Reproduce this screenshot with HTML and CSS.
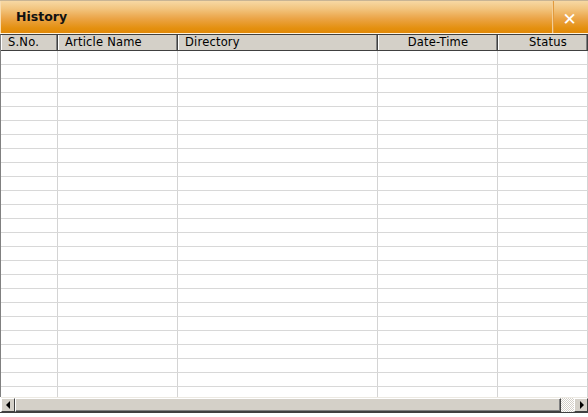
FILE: index.html
```html
<!DOCTYPE html>
<html>
<head>
<meta charset="utf-8">
<link rel="stylesheet" href="styles.css">
</head>
<body>
<div class="window">
  <div class="titlebar">
    <div class="title">History</div>
    <div class="close">&#x2715;</div>
  </div>
  <div class="grid">
    <div class="head">
      <div class="hc left">S.No.</div>
      <div class="hc left">Article Name</div>
      <div class="hc left">Directory</div>
      <div class="hc center">Date-Time</div>
      <div class="hc center status">Status</div>
    </div>
    <div class="body" id="body"></div>
  </div>
  <div class="hscroll">
    <div class="btn"><span class="tri l"></span></div>
    <div class="thumb"></div>
    <div class="track"></div>
    <div class="btn"><span class="tri r"></span></div>
  </div>
  <div class="foot"></div>
</div>
<script>
  var b = document.getElementById('body');
  for (var i = 0; i < 25; i++) {
    var r = document.createElement('div');
    r.className = 'row';
    for (var j = 0; j < 5; j++) {
      var c = document.createElement('div');
      c.className = 'cell';
      r.appendChild(c);
    }
    b.appendChild(r);
  }
</script>
</body>
</html>
```
FILE: styles.css
```css
html, body {
  margin: 0;
  padding: 0;
  background: #ffffff;
}
.window {
  width: 588px;
  height: 417px;
  display: flex;
  flex-direction: column;
  overflow: hidden;
  font-family: "DejaVu Sans", Verdana, sans-serif;
  background: #ffffff;
}
.titlebar {
  flex: none;
  display: flex;
  align-items: stretch;
  background: linear-gradient(to bottom, #f7d8a4 0%, #f2c47e 25%, #eba446 55%, #e4900f 85%, #e08808 100%);
  border-top: 1px solid #c8b494;
  border-bottom: 1px solid #fff4e0;
  box-sizing: border-box;
  height: 34px;
}
.title {
  flex: 1;
  padding-left: 15px;
  padding-top: 8px;
  font-size: 12.5px;
  font-weight: bold;
  color: #111111;
  border-left: 1px solid #f8dcb0;
}
.close {
  width: 36px;
  border-left: 1px solid #f3cf98;
  box-shadow: inset 1px 0 0 #e29a3c;
  color: #ffffff;
  font-size: 17px;
  font-weight: bold;
  display: flex;
  align-items: center;
  justify-content: center;
  padding-top: 4px;
  padding-right: 2px;
  box-sizing: border-box;
}
.grid {
  flex: 1;
  display: flex;
  flex-direction: column;
  overflow: hidden;
  border-top: 1px solid #404040;
  border-left: 1px solid #808080;
}
.head, .row {
  display: grid;
  grid-template-columns: 57px 120px 200px 120px 1fr;
}
.head {
  height: 15px;
  flex: none;
  background: #d4d0c8;
  border-bottom: 1px solid #404040;
}
.hc {
  font-size: 11.5px;
  letter-spacing: 0.2px;
  line-height: 15px;
  color: #000000;
  border-left: 1px solid #ffffff;
  border-right: 1px solid #404040;
  box-shadow: inset -1px 0 0 #808080;
  white-space: nowrap;
  overflow: hidden;
}
.hc.left { padding-left: 6px; }
.hc.center { text-align: center; }
.hc.status { padding-left: 10px; }
.body {
  flex: 1;
  overflow: hidden;
}
.row {
  height: 14px;
  box-sizing: border-box;
  border-bottom: 1px solid #d8d8d8;
}
.cell {
  border-right: 1px solid #d4d4d4;
}
.hscroll {
  height: 14px;
  flex: none;
  display: flex;
  background: #d4d0c8;
  border-top: 1px solid #ece9e2;
  margin-left: 1px;
}
.btn {
  width: 14px;
  height: 14px;
  box-sizing: border-box;
  background: #d4d0c8;
  border-top: 1px solid #ffffff;
  border-left: 1px solid #ffffff;
  border-right: 1px solid #404040;
  border-bottom: 1px solid #404040;
  display: flex;
  align-items: center;
  justify-content: center;
}
.tri {
  width: 0;
  height: 0;
  border-top: 4px solid transparent;
  border-bottom: 4px solid transparent;
}
.tri.l { border-right: 4px solid #000000; margin-right: 1px; }
.tri.r { border-left: 4px solid #000000; margin-left: 1px; }
.thumb {
  flex: 1;
  box-sizing: border-box;
  border-top: 1px solid #ffffff;
  border-left: 1px solid #ffffff;
  border-right: 1px solid #404040;
  border-bottom: 1px solid #404040;
  box-shadow: inset -1px -1px 0 #808080;
}
.track {
  width: 13px;
  background-color: #ffffff;
  background-image: linear-gradient(45deg, #d4d0c8 25%, transparent 25%, transparent 75%, #d4d0c8 75%), linear-gradient(45deg, #d4d0c8 25%, transparent 25%, transparent 75%, #d4d0c8 75%);
  background-size: 2px 2px;
  background-position: 0 0, 1px 1px;
}
.foot {
  height: 4px;
  flex: none;
  border-top: 1px solid #404040;
  background: #ffffff;
}
```
